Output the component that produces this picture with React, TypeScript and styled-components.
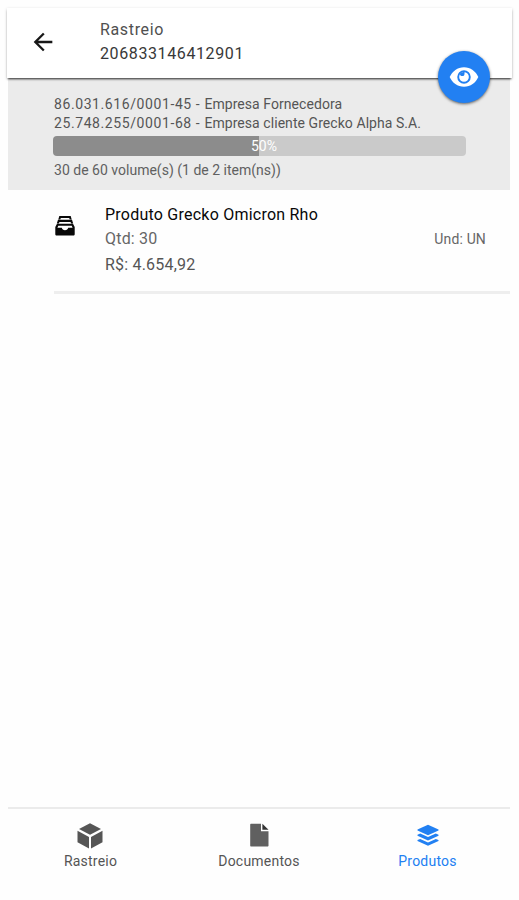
import React from "react";
import styled, { createGlobalStyle } from "styled-components";
import { MdArrowBack } from "react-icons/md";

const GlobalStyle = createGlobalStyle`
  * { box-sizing: border-box; }
  body { margin: 0; background: #fefefe; font-family: Roboto, "Liberation Sans", sans-serif; }
`;

const Screen = styled.div`
  width: 519px;
  height: 900px;
  padding: 8px 9px 0 8px;
  display: flex;
  flex-direction: column;
  overflow: hidden;
`;

const HeaderArea = styled.div`
  position: relative;
  z-index: 1;
`;

const Header = styled.header`
  height: 70px;
  margin: 0 -2px 0 -1px;
  padding: 10px 0 0 22px;
  display: flex;
  align-items: flex-start;
  background: #fff;
  box-shadow: 0 2px 2px -1px rgba(0, 0, 0, 0.75), 0 1px 3px rgba(0, 0, 0, 0.2);
`;

const BackButton = styled.button`
  width: 28px;
  height: 28px;
  margin-top: 10px;
  padding: 0;
  border: 0;
  background: none;
  color: #181818;
  svg { display: block; }
`;

const Titles = styled.div`
  margin-left: 43px;
`;

const Line = styled.div<{ $size: number; $height: number; $spacing: number; $color?: string }>`
  font-size: ${(p) => p.$size}px;
  line-height: ${(p) => p.$height}px;
  letter-spacing: ${(p) => p.$spacing}px;
  color: ${(p) => p.$color ?? "#555"};
  white-space: nowrap;
`;

const TaxId = styled.span`
  letter-spacing: 0.59px;
`;

const ViewButton = styled.button`
  position: absolute;
  z-index: 2;
  left: 430px;
  top: 43px;
  width: 52px;
  height: 52px;
  padding: 0;
  border: 0;
  border-radius: 50%;
  display: grid;
  place-items: center;
  background: #2280f2;
  color: #fff;
  box-shadow: 0 1px 3px rgba(0, 0, 0, 0.6);
`;

const Summary = styled.section`
  height: 112px;
  padding: 17px 44px 0 46px;
  background: #ebebeb;
`;

const Progress = styled.div`
  width: 413px;
  height: 20px;
  margin: 3px 0 4px -1px;
  padding-left: 9px;
  border-radius: 4px;
  display: grid;
  place-items: center;
  background: linear-gradient(90deg, #8c8c8c 50%, #cacaca 50%);
`;

const Product = styled.article`
  height: 104px;
  margin-left: 46px;
  padding-top: 14px;
  display: flex;
  border-bottom: 3px solid #eee;
  color: #080808;
`;

const ProductIcon = styled.div`
  width: 51px;
  padding: 12px 0 0 1px;
  svg { display: block; }
`;

const Unit = styled.div`
  margin: 26px 24px 0 auto;
`;

const Tabs = styled.nav`
  height: 93px;
  margin-top: auto;
  padding-top: 14px;
  border-top: 2px solid #ebebeb;
  display: grid;
  grid-template-columns: 165px 172px 165px;
`;

const Tab = styled.a<{ $active?: boolean }>`
  display: flex;
  flex-direction: column;
  align-items: center;
  color: ${(p) => (p.$active ? "#2280f2" : "#555")};
`;

const TabIcon = styled.div`
  height: 28px;
  svg { display: block; }
`;

const EyeIcon = () => (
  <svg width="30" height="22" viewBox="0 0 30 22">
    <path fill="currentColor" d="M15 1.200C8.500 1.200 3.300 5.200.7 11c2.600 5.800 7.800 9.800 14.300 9.800s11.700-4 14.300-9.800C26.700 5.200 21.500 1.200 15 1.200z" />
    <circle cx="15" cy="11" r="5.800" fill="none" stroke="#2280f2" strokeWidth="1.900" />
    <path fill="#2280f2" d="M11 7.500 15.500 5.500v2.200c0 1.500-.7 2.300-2.200 2.300-1.200 0-2-.5-2.300-1.500z" />
  </svg>
);

const TrayIcon = () => (
  <svg width="20" height="20" viewBox="0 0 20 20" fill="currentColor">
    <path d="M4.300 0h11.400l1 3.600h-2L14.200 2H5.800l-.5 1.600h-2z" />
    <path d="M3 3.800h14l1.200 3.800h-2.100L15.600 6H4.400l-.5 1.600H1.800z" />
    <path fillRule="evenodd" d="M2 7.700h16l1.700 3.300v7.200c0 .8-.6 1.400-1.400 1.400H1.700c-.8 0-1.400-.6-1.400-1.400V11zM3.300 9.700 2.400 11.800h4.400c.3 1.500 1.500 2.500 3.200 2.500s2.900-1 3.200-2.500h4.400l-.9-2.100z" />
  </svg>
);

const CubeIcon = () => (
  <svg width="27" height="26" viewBox="0 0 27 26" fill="currentColor">
    <path d="M13 .3 24 5.900 13 11.700 2 5.900z" />
    <path d="M.5 7.800 12 13.900v11.600L.5 19.300zM25.500 7.800 14 13.900v11.600l11.500-6.200z" />
  </svg>
);

const DocumentIcon = () => (
  <svg width="19" height="24" viewBox="0 0 19 24">
    <path fill="#606060" d="M1.200.8H11v7.400h7.500v14.400c0 .6-.4 1-1 1H1.200c-.6 0-1-.4-1-1V1.800c0-.6.4-1 1-1z" />
    <path fill="#333" d="M12.400.8 18.500 6.800h-6.100z" />
  </svg>
);

const LayersIcon = () => (
  <svg width="22" height="24" viewBox="0 -1.500 22 24" fill="currentColor">
    <path d="m11 .2 10.500 4.900v1L11 10.800.5 6.100v-1z" />
    <path d="m.5 10.200 2.700-1.200L11 12.500 18.800 9l2.700 1.200v1L11 16 .5 11.200z" />
    <path d="m.5 15.600 2.700-1.200L11 17.900l7.800-3.500 2.700 1.200v1L11 21.300.5 16.600z" />
  </svg>
);

const tabs = [
  { label: "Rastreio", icon: <CubeIcon /> },
  { label: "Documentos", icon: <DocumentIcon /> },
  { label: "Produtos", icon: <LayersIcon />, active: true },
];

export default function App() {
  return (
    <>
      <GlobalStyle />
      <Screen>
        <HeaderArea>
          <Header>
            <BackButton aria-label="Voltar"><MdArrowBack size={28} /></BackButton>
            <Titles>
              <Line $size={16} $height={23} $spacing={0.65} $color="#505050">Rastreio</Line>
              <Line $size={16} $height={25} $spacing={0.61} $color="#383838">206833146412901</Line>
            </Titles>
          </Header>
          <ViewButton aria-label="Visualizar"><EyeIcon /></ViewButton>
        </HeaderArea>
        <Summary>
          <Line $size={14} $height={19} $spacing={0.06}><TaxId>86.031.616/0001-45 - </TaxId>Empresa Fornecedora</Line>
          <Line $size={14} $height={19} $spacing={0.06}><TaxId>25.748.255/0001-68 - </TaxId>Empresa cliente Grecko Alpha S.A.</Line>
          <Progress><Line $size={14} $height={20} $spacing={0} $color="#fff">50%</Line></Progress>
          <Line $size={14} $height={20} $spacing={0.01} $color="#606060">30 de 60 volume(s) (1 de 2 item(ns))</Line>
        </Summary>
        <Product>
          <ProductIcon><TrayIcon /></ProductIcon>
          <div>
            <Line $size={16} $height={22} $spacing={0.23} $color="#080808">Produto Grecko Omicron Rho</Line>
            <Line $size={16} $height={26} $spacing={0.2} $color="#666">Qtd: 30</Line>
            <Line $size={16} $height={26} $spacing={0.2}>R$: 4.654,92</Line>
          </div>
          <Unit><Line $size={14} $height={19} $spacing={0.15} $color="#666">Und: UN</Line></Unit>
        </Product>
        <Tabs>
          {tabs.map((tab) => (
            <Tab key={tab.label} $active={tab.active}>
              <TabIcon>{tab.icon}</TabIcon>
              <Line $size={14} $height={20} $spacing={0.22} $color="inherit">{tab.label}</Line>
            </Tab>
          ))}
        </Tabs>
      </Screen>
    </>
  );
}
